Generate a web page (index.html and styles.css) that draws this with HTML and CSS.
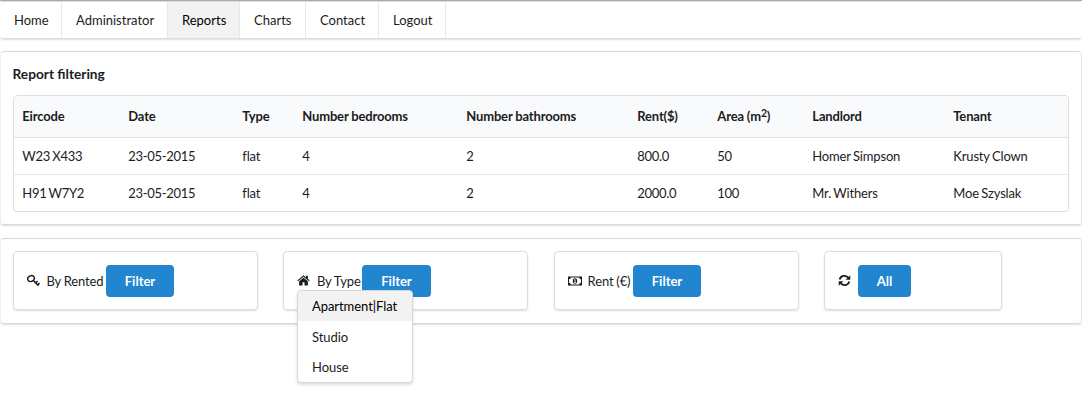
FILE: index.html
```html
<!DOCTYPE html>
<html lang="en">
<head>
<meta charset="utf-8">
<title>Reports</title>
<link rel="stylesheet" href="styles.css">
</head>
<body>
<nav class="menu">
  <a class="item home">Home</a>
  <a class="item admin">Administrator</a>
  <a class="item reports active">Reports</a>
  <a class="item charts">Charts</a>
  <a class="item contact">Contact</a>
  <a class="item logout">Logout</a>
</nav>
<section class="segment report">
  <h3 class="title">Report filtering</h3>
  <table class="table">
    <colgroup><col class="c1"><col class="c2"><col class="c3"><col class="c4"><col class="c5"><col class="c6"><col class="c7"><col class="c8"><col class="c9"></colgroup>
    <thead>
      <tr><th>Eircode</th><th>Date</th><th>Type</th><th>Number bedrooms</th><th>Number bathrooms</th><th>Rent($)</th><th>Area (m<sup>2</sup>)</th><th>Landlord</th><th>Tenant</th></tr>
    </thead>
    <tbody>
      <tr><td class="num">W23 X433</td><td class="num">23-05-2015</td><td>flat</td><td>4</td><td>2</td><td class="num">800.0</td><td class="num">50</td><td>Homer Simpson</td><td>Krusty Clown</td></tr>
      <tr><td class="num">H91 W7Y2</td><td class="num">23-05-2015</td><td>flat</td><td>4</td><td>2</td><td class="num">2000.0</td><td class="num">100</td><td>Mr. Withers</td><td>Moe Szyslak</td></tr>
    </tbody>
  </table>
</section>
<section class="segment filters">
  <div class="card rented">
    <svg class="icon" viewBox="0 0 13 13"><g fill="none" stroke="currentColor" stroke-width="1.5"><ellipse cx="4" cy="4.6" rx="3.4" ry="2.8" transform="rotate(-25 4 4.6)"/><path d="M6.2 6.4l5.3 5.3M8.5 9.1l2.1-2.1M10.6 11.1l2-2"/></g></svg>
    <span class="label">By Rented</span>
    <button class="button">Filter</button>
  </div>
  <div class="card type">
    <svg class="icon" viewBox="0 0 14 14"><path fill="currentColor" d="M7 1.3L.3 6.9l.8 1L7 3l5.9 4.9.8-1-2-1.7V1.9H9.7v1.7zM7 4L2.3 7.9v4.6h3.6V9h2.2v3.5h3.6V7.9z"/></svg>
    <span class="label">By Type</span>
    <button class="button">Filter</button>
    <div class="dropdown">
      <div class="option selected">Apartment|Flat</div>
      <div class="option">Studio</div>
      <div class="option">House</div>
    </div>
  </div>
  <div class="card rent">
    <svg class="icon money" viewBox="0 0 14 10"><path fill="currentColor" fill-rule="evenodd" d="M0 .5h14v9H0zM2.8 1.5A1.8 1.8 0 0 1 1 3.3v3.4a1.8 1.8 0 0 1 1.8 1.8h8.4A1.8 1.8 0 0 1 13 6.7V3.3a1.8 1.8 0 0 1-1.8-1.8z"/><ellipse cx="7" cy="5" rx="2.2" ry="2.7" fill="currentColor"/><path d="M6.3 4l.8-.6v3M6.1 6.5h1.9" fill="none" stroke="#fff" stroke-width=".8"/></svg>
    <span class="label">Rent (€)</span>
    <button class="button">Filter</button>
  </div>
  <div class="card all">
    <svg class="icon" viewBox="0 0 14 14"><g fill="none" stroke="currentColor" stroke-width="1.9"><path d="M1.8 5.8C3 1.6 8 .8 11.2 4.1M12.2 8.2C11 12.4 6 13.2 2.8 9.9"/></g><path fill="currentColor" d="M13.2 1.3v5H8.3zM.8 12.7v-5h4.9z"/></svg>
    <button class="button">All</button>
  </div>
</section>
</body>
</html>
```
FILE: styles.css
```css
* { box-sizing: border-box; }
body {
  min-height: 407px;
  margin: 0;
  border-top: 1px solid #aaa;
  background: #fff;
  color: #1b1c1d;
  font: 13px/18px Lato, sans-serif;
}
.menu {
  display: flex;
  height: 38px;
  border: 1px solid #dcddde;
  border-left-color: transparent;
  border-right-color: transparent;
  border-radius: 4px;
  box-shadow: 0 1px 2px rgba(34, 36, 38, .15);
}
.item {
  display: flex;
  align-items: center;
  padding: 0 0 1px 13px;
  border-right: 1px solid #e7e7e8;
}
.home { width: 61px; }
.admin { width: 106px; padding-left: 14px; }
.reports { width: 72px; padding-left: 14px; }
.charts { width: 66px; padding-left: 14px; }
.contact { width: 73px; padding-left: 14px; }
.logout { width: 67px; padding-left: 14px; }
.active { background: #f2f2f2; color: #000; }
.segment {
  border: 1px solid #d8d9da;
  border-left-color: #eee;
  border-right-color: #e4e4e4;
  border-radius: 4px;
  box-shadow: 0 1px 2px rgba(34, 36, 38, .15);
}
.report { height: 174px; margin-top: 12px; padding: 13px 12px 0; }
.title { margin: 0 0 12px -.5px; font-size: 13.7px; line-height: 18px; }
.table {
  width: 1056px;
  height: 117px;
  table-layout: fixed;
  border: 1px solid #dcddde;
  border-radius: 4px;
  border-spacing: 0;
  overflow: hidden;
}
.c1 { width: 106px; }
.c2 { width: 114px; }
.c3 { width: 60px; }
.c4 { width: 164px; }
.c5 { width: 171px; }
.c6 { width: 80px; }
.c7 { width: 95px; }
.c8 { width: 141px; }
.table th, .table td { padding: 0 0 1px 8.3px; text-align: left; white-space: nowrap; }
.table th { height: 42px; border-bottom: 1px solid #e2e3e4; background: #f9fafb; letter-spacing: -.17px; }
.table td { height: 37px; letter-spacing: -.17px; word-spacing: -.7px; }
.table td.num { letter-spacing: -.3px; }
.table tbody tr:first-child td { border-bottom: 1px solid #e7e7e8; }
.table tbody tr:last-child td { height: 36px; }
sup { position: relative; top: -4px; vertical-align: baseline; font-size: 10.5px; line-height: 0; }
.filters {
  display: flex;
  align-items: flex-start;
  height: 86px;
  margin-top: 13px;
  padding: 12px 12px 0;
}
.card {
  position: relative;
  display: flex;
  align-items: center;
  width: 245px;
  height: 59px;
  margin-right: 25px;
  padding: 0 0 0 13px;
  border: 1px solid #dcddde;
  border-radius: 4px;
  box-shadow: 0 1px 2px rgba(34, 36, 38, .15);
}
.type { margin-right: 26px; }
.all { width: 178px; margin-right: 0; }
.icon { width: 13px; height: 13px; margin-right: 7px; }
.rented .icon { margin-right: 6.5px; }
.money { width: 14px; height: 10px; margin: 0 6.5px 0 -.5px; }
.rent .label { margin-left: -.4px; margin-right: .4px; }
.label { width: 59px; white-space: nowrap; letter-spacing: -.12px; word-spacing: -.4px; }
.rented .label { width: 59.5px; }
.type .label, .rent .label { width: 45px; }
.button {
  width: 68px;
  height: 32px;
  padding: 0;
  border: 0;
  border-radius: 4px;
  background: #2185d0;
  color: #fff;
  font: bold 13px/18px Lato, sans-serif;
}
.type .button { width: 69px; }
.all .button { width: 53px; }
.dropdown {
  position: absolute;
  z-index: 2;
  top: 38px;
  left: 13px;
  width: 116px;
  height: 93px;
  border: 1px solid #d8d9da;
  border-radius: 4px;
  background: #fff;
  box-shadow: 0 2px 3px rgba(34, 36, 38, .15);
  overflow: hidden;
}
.option { height: 30.3px; padding: 6.4px 14px 0; white-space: nowrap; letter-spacing: -.06px; }
.selected { background: #f2f2f2; color: #000; }
```
